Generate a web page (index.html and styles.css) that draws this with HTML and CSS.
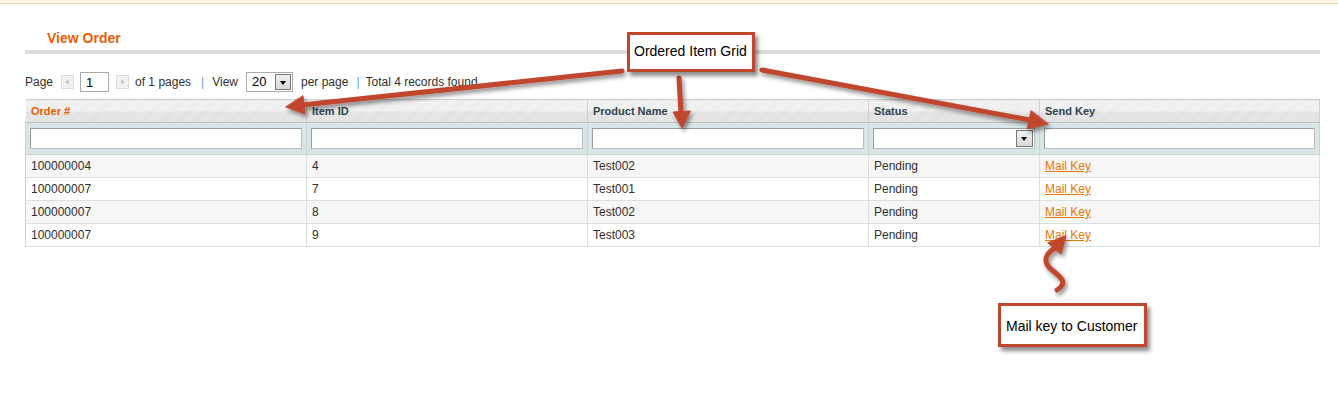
FILE: index.html
```html
<!DOCTYPE html>
<html lang="en">
<head>
    <meta charset="UTF-8">
    <meta name="viewport" content="width=device-width, initial-scale=1.0">
    <title>View Order</title>
    <link rel="stylesheet" href="styles.css">
</head>
<body>

    <div class="notice-bar"></div>

    <div class="main">
        <div class="content-header">
            <h3>View Order</h3>
        </div>

        <div class="pager">
            <span>Page</span>
            <span class="arrow-btn prev"></span>
            <span class="page-input">1</span>
            <span class="arrow-btn next"></span>
            <span class="pages">of 1 pages</span>
            <span class="sep">|</span>
            <span>View</span>
            <span class="select-box limit"><span class="value">20</span><span class="drop"></span></span>
            <span class="per-page">per page</span>
            <span class="sep sep-short">|</span>
            <span>Total 4 records found</span>
        </div>

        <table class="grid">
            <colgroup>
                <col style="width: 281px">
                <col style="width: 281px">
                <col style="width: 281px">
                <col style="width: 171px">
                <col style="width: 280px">
            </colgroup>
            <thead>
                <tr class="headings">
                    <th class="sorted">Order #</th>
                    <th>Item ID</th>
                    <th>Product Name</th>
                    <th>Status</th>
                    <th>Send Key</th>
                </tr>
                <tr class="filter">
                    <th><span class="input-text"></span></th>
                    <th><span class="input-text"></span></th>
                    <th><span class="input-text"></span></th>
                    <th><span class="select-box status"><span class="value"></span><span class="drop"></span></span></th>
                    <th><span class="input-text"></span></th>
                </tr>
            </thead>
            <tbody>
                <tr class="even">
                    <td>100000004</td><td>4</td><td>Test002</td><td>Pending</td><td><a href="#">Mail Key</a></td>
                </tr>
                <tr>
                    <td>100000007</td><td>7</td><td>Test001</td><td>Pending</td><td><a href="#">Mail Key</a></td>
                </tr>
                <tr class="even">
                    <td>100000007</td><td>8</td><td>Test002</td><td>Pending</td><td><a href="#">Mail Key</a></td>
                </tr>
                <tr>
                    <td>100000007</td><td>9</td><td>Test003</td><td>Pending</td><td><a href="#">Mail Key</a></td>
                </tr>
            </tbody>
        </table>
    </div>

    <!-- annotations drawn over the screenshot -->
    <svg class="arrows" width="1338" height="401" viewBox="0 0 1338 401">
        <defs>
            <filter id="shadow" x="-20%" y="-20%" width="140%" height="140%">
                <feDropShadow dx="2" dy="3" stdDeviation="2" flood-color="#000" flood-opacity="0.45"/>
            </filter>
        </defs>
        <g filter="url(#shadow)" fill="#c0462e" stroke="#c0462e" stroke-linecap="round">
            <line x1="622" y1="71" x2="302" y2="105" stroke-width="5"/>
            <polygon points="286,107 305,114 303,96" stroke-width="1"/>

            <line x1="679" y1="78" x2="681" y2="113" stroke-width="5"/>
            <polygon points="682,128 673,112 690,111" stroke-width="1"/>

            <line x1="762" y1="70" x2="1030" y2="120" stroke-width="5"/>
            <polygon points="1048,124 1027,129 1031,111" stroke-width="1"/>

            <path d="M1057,290 C1068,283 1062,278 1052,270 C1042,262 1045,254 1055,248" fill="none" stroke-width="5"/>
            <polygon points="1066,236 1061,254 1048,243" stroke-width="1"/>
        </g>
    </svg>

    <div class="callout grid-note">Ordered Item Grid</div>
    <div class="callout mail-note">Mail key to Customer</div>

</body>
</html>
```

FILE: styles.css
```css
body {
    margin: 0;
    font-family: "Liberation Sans", Arial, sans-serif;
    font-size: 12px;
    color: #2f2f2f;
    background: #fff;
    position: relative;
    width: 1338px;
    height: 401px;
    overflow: hidden;
}
.notice-bar {
    height: 3px;
    background-color: #fdf6e2;
    border-bottom: 1px solid #e8dbb6;
}
.main {
    padding: 0 18px 0 25px;
}
.content-header {
    padding: 25px 0 3px 22px;
    border-bottom: 4px solid #dcdcdc;
}
.content-header h3 {
    margin: 0;
    font-size: 14px;
    line-height: 18px;
    color: #eb5e00;
}

/* pager */
.pager {
    display: flex;
    align-items: center;
    height: 20px;
    margin-top: 18px;
    white-space: nowrap;
}
.arrow-btn {
    display: inline-block;
    width: 11px;
    height: 12px;
    margin-left: 8px;
    background: #f2f2f2;
    border: 1px solid #dcdcdc;
    position: relative;
}
.arrow-btn::after {
    content: "";
    position: absolute;
    top: 3px;
    border-top: 3px solid transparent;
    border-bottom: 3px solid transparent;
}
.arrow-btn.prev::after {
    left: 3px;
    border-right: 4px solid #c8c8c8;
}
.arrow-btn.next::after {
    left: 4px;
    border-left: 4px solid #c8c8c8;
}
.page-input {
    display: inline-block;
    box-sizing: border-box;
    width: 29px;
    height: 20px;
    margin-left: 6px;
    padding: 2px 0 0 5px;
    border: 1px solid #aaa;
    font-size: 13px;
    line-height: 15px;
    color: #000;
}
.next {
    margin-left: 7px;
}
.pages {
    margin-left: 6px;
}
.sep {
    color: #6d9fd5;
    margin: 0 8px 0 10px;
}
.sep-short {
    margin: 0 6px 0 8px;
}
.select-box {
    display: inline-flex;
    box-sizing: border-box;
    border: 1px solid #aaa;
    background: #fff;
    padding: 1px;
    position: relative;
}
.select-box .value {
    flex: 1;
    font-size: 13px;
    line-height: 16px;
    padding-left: 4px;
    color: #000;
}
.select-box .drop {
    width: 14px;
    height: 14px;
    background: linear-gradient(#f0f0f0, #d8d8d8);
    border: 1px solid #777;
    position: relative;
}
.select-box .drop::after {
    content: "";
    position: absolute;
    left: 4px;
    top: 6px;
    border-left: 3px solid transparent;
    border-right: 3px solid transparent;
    border-top: 4px solid #000;
}
.limit {
    width: 47px;
    height: 20px;
    margin-left: 8px;
}
.per-page {
    margin-left: 8px;
}

/* grid */
.grid {
    margin-top: 7px;
    width: 1294px;
    table-layout: fixed;
    border-collapse: collapse;
    border: 1px solid #cbd3d4;
}
.grid th,
.grid td {
    text-align: left;
    padding: 0 5px;
    overflow: hidden;
    white-space: nowrap;
}
.headings th {
    height: 22px;
    font-size: 11px;
    color: #2d444f;
    border-left: 1px solid #f9f9f9;
    border-right: 1px solid #d1cfcf;
    border-bottom: 1px solid #bfbfbf;
    background:
        linear-gradient(to bottom, rgba(255, 255, 255, 0) 50%, rgba(0, 0, 0, 0.05) 50%),
        repeating-linear-gradient(135deg, #e8e8e8 0 1px, #f4f4f4 1px 3px);
}
.headings th.sorted {
    color: #eb5e00;
}
.filter th {
    height: 31px;
    padding: 0 4px 0 4px;
    background-color: #d9e6e8;
    background-image: radial-gradient(#cddcdf 0.8px, transparent 0.8px);
    background-size: 3px 3px;
    border-right: 1px solid #c9d4d6;
    border-bottom: 1px solid #c9d1d3;
}
.input-text {
    display: block;
    box-sizing: border-box;
    height: 21px;
    background: #fff;
    border: 1px solid #aaa;
    border-color: #9c9c9c #bcbcbc #bcbcbc #9c9c9c;
}
.status {
    display: flex;
    height: 21px;
    border-color: #9c9c9c #bcbcbc #bcbcbc #9c9c9c;
}
.status .drop {
    width: 15px;
    height: 15px;
}
.grid td {
    height: 22px;
    border-right: 1px solid #dadfe0;
    border-bottom: 1px solid #dadfe0;
    color: #2f2f2f;
}
.grid tr.even td {
    background-color: #f6f6f6;
}
.grid a {
    color: #ea7601;
    text-decoration: underline;
}

/* annotation overlay */
.arrows {
    position: absolute;
    left: 0;
    top: 0;
    pointer-events: none;
}
.callout {
    position: absolute;
    box-sizing: border-box;
    background: #fff;
    border: 3px solid #c0462e;
    box-shadow: 3px 4px 4px rgba(0, 0, 0, 0.45);
    font-size: 14px;
    color: #000;
}
.grid-note {
    left: 627px;
    top: 32px;
    width: 128px;
    height: 40px;
    padding: 8px 0 0 4px;
}
.mail-note {
    left: 998px;
    top: 303px;
    width: 149px;
    height: 44px;
    padding: 12px 0 0 5px;
}
```
